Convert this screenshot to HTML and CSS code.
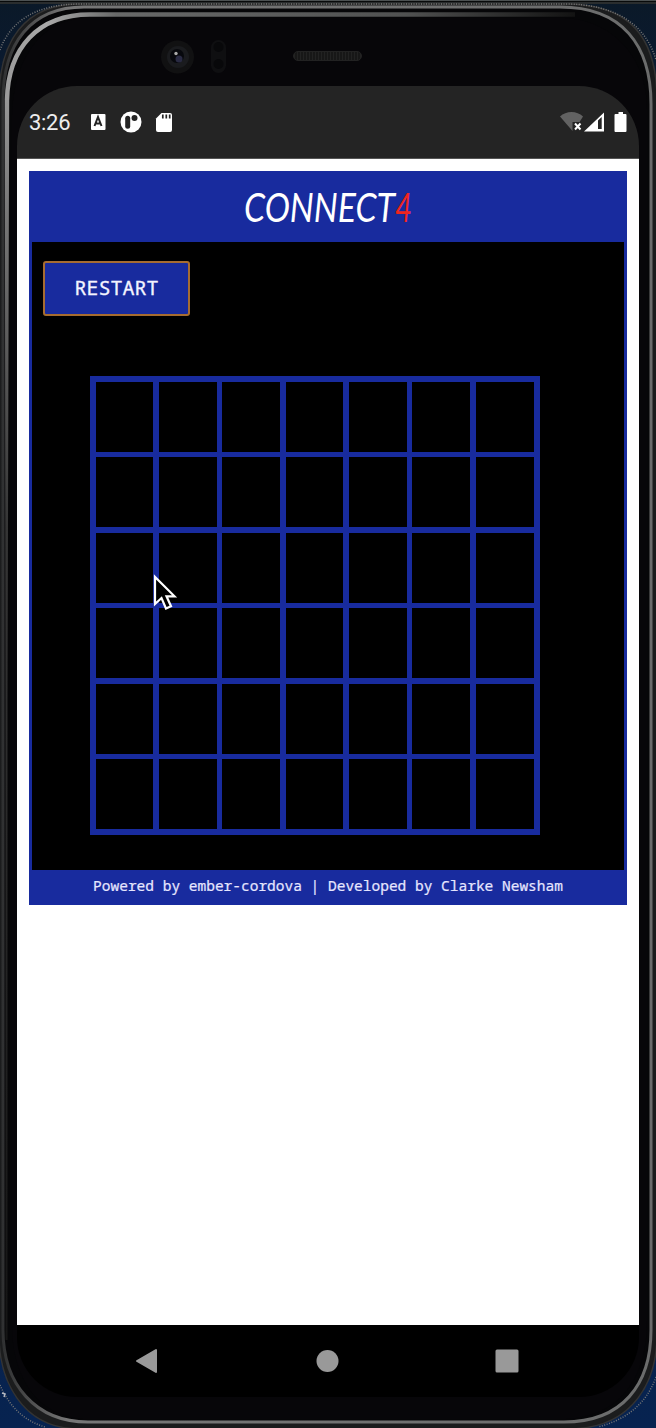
FILE: index.html
```html
<!DOCTYPE html>
<html lang="en">
<head>
<meta charset="utf-8">
<title>Connect 4</title>
<link rel="stylesheet" href="styles.css">
</head>
<body>
<div class="device">
  <svg class="frame" viewBox="0 0 656 1428" aria-hidden="true">
    <defs>
      <linearGradient id="rim" gradientUnits="userSpaceOnUse" x1="0" y1="0" x2="580" y2="0">
        <stop offset="0" stop-color="#999"/><stop offset=".08" stop-color="#aaa"/><stop offset=".2" stop-color="#686969"/><stop offset=".7" stop-color="#505151"/><stop offset="1" stop-color="#111"/>
      </linearGradient>
      <linearGradient id="side" gradientUnits="userSpaceOnUse" x1="0" y1="90" x2="0" y2="1340">
        <stop offset="0" stop-color="#999"/><stop offset=".1" stop-color="#777"/><stop offset=".35" stop-color="#353535"/><stop offset="1" stop-color="#151515"/>
      </linearGradient>
      <linearGradient id="edge" x1="0" y1="0" x2="1" y2="0">
        <stop offset="0" stop-color="#303132"/><stop offset=".1" stop-color="#777"/><stop offset="1" stop-color="#6b6c6c"/>
      </linearGradient>
      <linearGradient id="sky" x1="0" y1="0" x2="0" y2="1">
        <stop offset="0" stop-color="#0b1928"/><stop offset=".05" stop-color="#0a1a30"/><stop offset="1" stop-color="#072350"/>
      </linearGradient>
      <pattern id="mesh" width="3" height="3" patternUnits="userSpaceOnUse"><rect width="3" height="3" fill="#171717"/><path d="M.5 0v3" stroke="#222"/></pattern>
    </defs>
    <rect width="656" height="1428" fill="url(#sky)"/>
    <path d="M0 0h656v4H0z" fill="#080a0a"/>
    <path d="M0 .5h656M0 3h656" stroke="#4c5152"/>
    <path d="M-1 100C-1 40 25 4 80 4H565C628 4 657 35 657 100V1335C657 1378 636 1429 568 1429H80C20 1429-1 1378-1 1335Z" fill="#1b1c1d" stroke="#333" stroke-width="1.5"/>
    <path d="M0 50C10 22 35 4 80 4H565C616 4 646 25 656 60M656 1377C646 1405 625 1420 598 1427M0 1385C10 1408 25 1421 45 1427" fill="none" stroke="#777" stroke-width="1.500" stroke-dasharray="1 1.5"/>
    <path d="M3 101C3 43 31 7 84 7H560C622 7 651 45 651 104V1330C651 1385 622 1422 564 1422H88C36 1422 3 1385 3 1330Z" fill="#060608" stroke="url(#edge)" stroke-width="3"/>
    <path d="M7 100C8 48 38 14.500 90 14.500H575" fill="none" stroke="url(#rim)" stroke-width="4.500"/>
    <path d="M4.800 100h4.400L7.500 700V1340H5.500V700Z" fill="url(#side)"/>
    <path d="M12 116C13 60 41 18 88 18H560C612 18 647 57 647 110V1320C647 1378 620 1419 560 1419H88C40 1419 12 1380 12 1325Z" fill="#070609"/>
    <circle cx="177.500" cy="57" r="16.500" fill="#111112"/>
    <circle cx="178" cy="57" r="11" fill="#1a1b1e"/>
    <circle cx="177" cy="56" r="7" fill="#07080d"/>
    <circle cx="179" cy="59" r="3.500" fill="#292a43"/>
    <circle cx="176" cy="53.500" r="1.700" fill="#aaa"/>
    <rect x="211" y="40" width="15" height="33" rx="7.500" fill="#0f0f11"/>
    <circle cx="218.500" cy="47" r="5" fill="#08080a"/><circle cx="218.500" cy="64" r="5" fill="#08080a"/>
    <rect x="293.500" y="51.500" width="68" height="9" rx="4.500" fill="url(#mesh)" stroke="#222"/>
    <path d="M2 1393l3 1-1 3" fill="none" stroke="#b6bac5" stroke-width="1.500"/>
  </svg>

  <div class="screen">
    <header class="status">
      <span class="time">3:26</span>
      <svg class="notifications" viewBox="0 0 84 22" width="84" height="22">
        <rect x="1" y="3" width="14.500" height="16" rx="1" fill="#fff"/>
        <path d="M4.500 15 8 6l3.500 9M5.800 12.500h4.400" fill="none" stroke="#242424" stroke-width="2"/>
        <circle cx="41" cy="11" r="10.500" fill="#fff"/>
        <rect x="35.200" y="4.700" width="5" height="13" rx="2.500" fill="#242424"/>
        <circle cx="44.500" cy="7" r="3" fill="#242424"/>
        <path d="M71.500 2H80a2 2 0 0 1 2 2v15a2 2 0 0 1-2 2H68a2 2 0 0 1-2-2V7.500Z" fill="#fff"/>
        <path d="M72.800 3.500v4M76.300 3.500v4M79.700 3.500v4" stroke="#242424" stroke-width="1.700"/>
      </svg>
      <svg class="signals" viewBox="0 0 70 22" width="70" height="22">
        <path d="M1 5.500C7-.5 18-.5 24 5.500L20.500 11H13.500V20Z" fill="#626262"/>
        <path d="m16 12.500 5.500 6m0-6-5.500 6" stroke="#fff" stroke-width="2"/>
        <path d="M25 20.500 45 1.500v19Z" fill="#fff"/><path d="M39 9.500 42.700 6v12H39Z" fill="#242424"/>
        <path d="M59.500 1h4.500v2h2.500q1 0 1 1v16q0 1-1 1h-10q-1 0-1-1V4q0-1 1-1h3Z" fill="#fff"/>
      </svg>
    </header>

    <main class="page">
      <section class="game">
        <h1 class="title">
          <svg viewBox="0 0 200 70" width="200" height="70">
            <text class="script" x="16" y="50" textLength="151" lengthAdjust="spacingAndGlyphs">CONNECT</text>
            <text class="script four" x="167" y="50" textLength="17" lengthAdjust="spacingAndGlyphs">4</text>
          </svg>
        </h1>
        <div class="play">
          <button class="restart" type="button">RESTART</button>
          <div class="board">
            <i></i><i></i><i></i><i></i><i></i><i></i><i></i>
            <i></i><i></i><i></i><i></i><i></i><i></i><i></i>
            <i></i><i></i><i></i><i></i><i></i><i></i><i></i>
            <i></i><i></i><i></i><i></i><i></i><i></i><i></i>
            <i></i><i></i><i></i><i></i><i></i><i></i><i></i>
            <i></i><i></i><i></i><i></i><i></i><i></i><i></i>
          </div>
        </div>
        <footer class="credits">Powered by ember-cordova | Developed by Clarke Newsham</footer>
      </section>
    </main>

    <nav class="navigation">
      <svg viewBox="0 0 622 72" width="622" height="72">
        <path d="M120 36 139 25v22Z" fill="#999" stroke="#999" stroke-width="2" stroke-linejoin="round"/>
        <circle cx="310.500" cy="36" r="11" fill="#999"/>
        <rect x="478.500" y="24.500" width="23" height="23" rx="1.500" fill="#999"/>
      </svg>
    </nav>
  </div>
  <svg class="cursor" viewBox="0 0 26 40" width="26" height="40"><path d="M3 4v27l6.500-6 4.500 10.500 5-2.200-4.500-10H22.500Z" stroke="#fff" stroke-width="2.200"/></svg>
</div>
</body>
</html>
```

FILE: styles.css
```css
* { box-sizing: border-box; }
body { margin: 0; background: #071d3b; }
.device { position: relative; width: 656px; height: 1428px; padding: 86px 17px 31px; overflow: hidden; }
.frame { position: absolute; inset: 0; width: 656px; height: 1428px; }
.screen { position: relative; display: flex; flex-direction: column; width: 622px; height: 1311px; overflow: hidden; border-radius: 60px; }
.status { display: flex; align-items: center; height: 73px; flex: none; padding: 0 10px 0 12px; background: #242424; border-bottom: 1px solid #555; }
.time { width: 61px; padding-top: 2px; color: #eee; font: 22px/24px Roboto, sans-serif; letter-spacing: -.3px; }
.signals { margin-left: auto; }
.page { flex: 1; padding: 12px; background: #fff; }
.game { display: flex; flex-direction: column; width: 598px; height: 734px; background: #182b9e; }
.title { display: flex; align-items: center; justify-content: center; height: 71px; margin: 0; font-weight: 400; }
.script { font: italic 40px Lato, sans-serif; fill: #fff; }
.four { fill: #ee251e; }
.play { flex: 1; margin: 0 3px; padding: 19px 0 0 11px; background: #000; }
.restart { display: block; width: 147px; height: 55px; padding: 0 0 2px; border: 2px solid #a66c30; border-radius: 3px; background: #182b9e; color: #f3f3ff; font: 20px "Noto Sans Mono", "DejaVu Sans Mono", monospace; -webkit-text-stroke: .3px #f3f3ff; }
.board { display: grid; grid-template-columns: repeat(7, 1fr); grid-template-rows: repeat(6, 1fr); gap: 5.5px; width: 450px; height: 459px; margin: 60px 0 0 46.5px; padding: 6px; background: #182b9e; }
.board i { background: #000; }
.credits { height: 35px; color: #e6e6ff; font: 14.5px/31px "Noto Sans Mono", "DejaVu Sans Mono", monospace; text-align: center; white-space: nowrap; -webkit-text-stroke: .2px #e6e6ff; }
.navigation { height: 72px; flex: none; background: #000; }
.navigation svg { display: block; }
.cursor { position: absolute; left: 152px; top: 573px; }
```
